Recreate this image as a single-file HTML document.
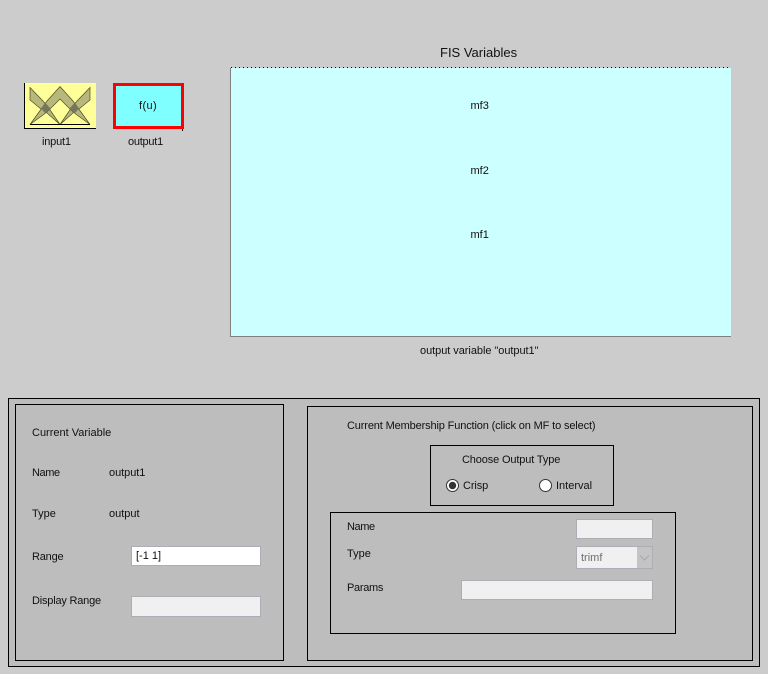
<!DOCTYPE html>
<html>
<head>
<meta charset="utf-8">
<style>
html,body{margin:0;padding:0;width:768px;height:674px;overflow:hidden;background:#cccccc;}
body{position:relative;font-family:"Liberation Sans",Arial,sans-serif;font-size:11px;color:#000;}
.a{position:absolute;box-sizing:border-box;}
.t{position:absolute;white-space:nowrap;line-height:13px;color:#111;}
.n{letter-spacing:-.14px;}
.b{position:absolute;box-sizing:border-box;border:1px solid #000;}
.f{position:absolute;box-sizing:border-box;border:1px solid #adadb5;background:#f0f0f0;}
</style>
</head>
<body>
<svg class="a" style="left:24px;top:83px" width="72" height="46" viewBox="24 83 72 46">
<rect x="24" y="83" width="72" height="46" fill="#ffff99"/>
<g fill="#b8b87c" stroke="#4a4a28" stroke-width=".7">
<polygon points="30,87.5 43,101 48,107 60,124.5 47,113 41,109 30,100"/>
<polygon points="90,87.5 77,101 72,107 60,124.5 73,113 79,109 90,100"/>
<polygon points="30,124.5 42,108 47,101 60,86.5 73,101 78,108 90,124.5 73,112 60,99 47,112"/>
</g>
<polygon points="45.5,103 50.5,108.5 45.5,113.5 41,108.5" fill="#76765a"/>
<polygon points="74.5,103 79,108.5 74.5,113.5 69.5,108.5" fill="#76765a"/>
<g shape-rendering="crispEdges">
<rect x="30" y="124" width="60" height="1" fill="#000"/>
<rect x="24" y="83" width="1" height="46" fill="#000"/>
<rect x="24" y="128" width="72" height="1" fill="#000"/>
</g>
</svg>
<div class="a" style="left:113px;top:83px;width:71px;height:46px;background:#7fffff;border:3px solid #ff0000;"></div>
<div class="a" style="left:182px;top:129px;width:1px;height:2px;background:#000;"></div>
<div class="t n" style="left:42px;top:136px;letter-spacing:-.2px">input1</div>
<div class="t n" style="left:128px;top:136px;letter-spacing:-.25px">output1</div>
<div class="t" style="left:139px;top:100px;letter-spacing:.4px">f(u)</div>

<div class="t" style="left:440px;top:46px;font-size:13px;line-height:14px">FIS Variables</div>
<div class="a" style="left:230px;top:68px;width:501px;height:269px;background:#ccffff;border-left:1px solid #808080;border-bottom:1px solid #808080;"></div>
<div class="a" style="left:231px;top:67px;width:500px;height:1px;background-image:repeating-linear-gradient(to right,#000 0,#000 1px,#ccc 1px,#ccc 4px);"></div>
<div class="t" style="left:470.5px;top:100px">mf3</div>
<div class="t" style="left:470.5px;top:165px">mf2</div>
<div class="t" style="left:470.5px;top:229px">mf1</div>
<div class="t" style="left:420px;top:345px;letter-spacing:-.05px">output variable "output1"</div>

<div class="b" style="left:8px;top:398px;width:752px;height:269px;background:#bdbdbd;"></div>
<div class="b" style="left:15px;top:404px;width:269px;height:257px;"></div>
<div class="b" style="left:307px;top:406px;width:446px;height:255px;"></div>
<div class="b" style="left:430px;top:445px;width:184px;height:61px;"></div>
<div class="b" style="left:330px;top:512px;width:346px;height:122px;"></div>

<div class="t" style="left:32px;top:427px">Current Variable</div>
<div class="t n" style="left:32px;top:467px;letter-spacing:-.4px">Name</div>
<div class="t" style="left:109px;top:467px;letter-spacing:-.05px">output1</div>
<div class="t" style="left:32px;top:508px">Type</div>
<div class="t" style="left:109px;top:508px">output</div>
<div class="t" style="left:32px;top:551px;letter-spacing:-.2px">Range</div>
<div class="t" style="left:32px;top:595px;letter-spacing:-.2px">Display Range</div>
<div class="f" style="left:131px;top:546px;width:130px;height:20px;background:#fff;"></div>
<div class="t" style="left:136px;top:550px">[-1 1]</div>
<div class="f" style="left:131px;top:596px;width:130px;height:21px;"></div>

<div class="t n" style="left:347px;top:420px">Current Membership Function (click on MF to select)</div>
<div class="t n" style="left:462px;top:454px">Choose Output Type</div>
<svg class="a" style="left:445px;top:478px" width="16" height="16" viewBox="0 0 16 16">
<circle cx="7.5" cy="7.5" r="6" fill="#fff" stroke="#333" stroke-width="1"/>
<circle cx="7.5" cy="7.5" r="3.7" fill="#333"/>
</svg>
<div class="t" style="left:463px;top:480px;letter-spacing:-.1px">Crisp</div>
<svg class="a" style="left:538px;top:478px" width="16" height="16" viewBox="0 0 16 16">
<circle cx="7.5" cy="7.5" r="6" fill="#fff" stroke="#333" stroke-width="1"/>
</svg>
<div class="t" style="left:556px;top:480px">Interval</div>

<div class="t" style="left:347px;top:521px;letter-spacing:-.4px">Name</div>
<div class="t" style="left:347px;top:548px">Type</div>
<div class="t" style="left:347px;top:582px;letter-spacing:-.3px">Params</div>
<div class="f" style="left:576px;top:519px;width:77px;height:20px;"></div>
<div class="f" style="left:576px;top:546px;width:77px;height:23px;"></div>
<div class="a" style="left:637px;top:547px;width:15px;height:21px;background:#c4c4c4;"></div>
<svg class="a" style="left:637px;top:547px" width="15" height="21" viewBox="0 0 15 21"><path d="M3 8.5 L7.5 13 L12 8.5" fill="none" stroke="#a8a8a8" stroke-width="1"/></svg>
<div class="t" style="left:581px;top:552px;color:#6d6d6d">trimf</div>
<div class="f" style="left:461px;top:580px;width:192px;height:20px;"></div>
</body>
</html>
